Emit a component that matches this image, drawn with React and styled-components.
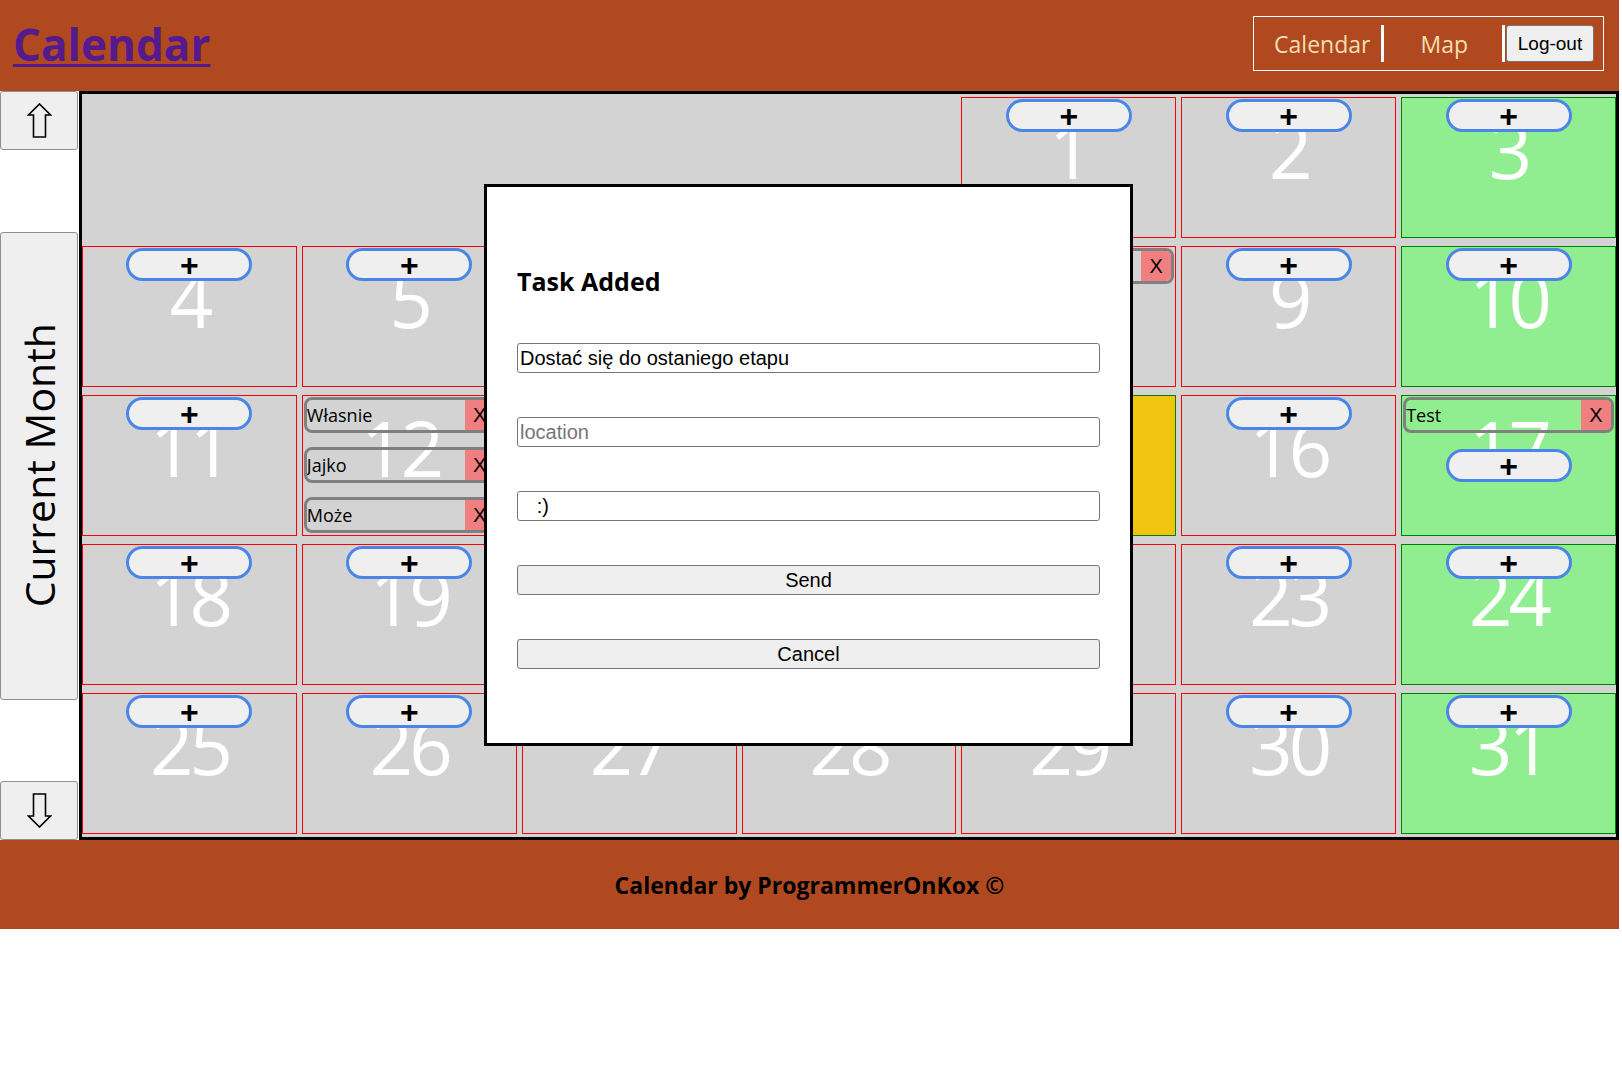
import React from 'react'
import styled, { createGlobalStyle } from 'styled-components'

const GlobalStyle = createGlobalStyle`
	html, body {
		margin: 0;
		padding: 0;
		background: #ffffff;
	}

	body {
		font-family: "Open Sans", "Noto Sans", sans-serif;
	}

	* {
		box-sizing: border-box;
	}
`

const BRICK = '#b0491f'
const FIRST_COLUMN = 5
const TODAY = 15
const MAX_VISIBLE_TASKS = 2

const tasks = {
	8: ['Trening'],
	12: ['Własnie', 'Jajko', 'Może'],
	17: ['Test'],
}

const days = Array.from({ length: 31 }, (_, idx) => idx + 1)

const dayKind = (day) => {
	if (day === TODAY) return 'today'
	if ((day + FIRST_COLUMN - 2) % 7 === 6) return 'weekend'
	return 'normal'
}

const Arrow = ({ down }) => (
	<svg width='25' height='35' viewBox='0 0 25 35'>
		<polygon
			points='12.5,1 23.5,12 18.5,12 18.5,34 6.5,34 6.5,12 1.5,12'
			fill='none'
			stroke='#000'
			strokeWidth='1.6'
			strokeLinejoin='miter'
			transform={down ? 'rotate(180 12.5 17.5)' : undefined}
		/>
	</svg>
)

const App = () => {
	const renderCell = (day) => {
		const list = tasks[day] || []

		return (
			<Cell
				key={day}
				$kind={dayKind(day)}
				$start={day === 1 ? FIRST_COLUMN : null}
				$scrolls={list.length > MAX_VISIBLE_TASKS}
			>
				<DayNumber>{day}</DayNumber>

				<CellBody>
					{list.map((task) => (
						<TaskItem key={task}>
							<TaskText>{task}</TaskText>
							<RemoveButton>X</RemoveButton>
						</TaskItem>
					))}

					<PlusButton>+</PlusButton>
				</CellBody>
			</Cell>
		)
	}

	return (
		<Page>
			<GlobalStyle />

			<Header>
				<Title href='#'>Calendar</Title>

				<Nav>
					<NavLink $pl={20} $pr={11}>Calendar</NavLink>
					<NavLink $pl={36} $pr={34}>Map</NavLink>
					<LogoutButton>Log-out</LogoutButton>
				</Nav>
			</Header>

			<Main>
				<Sidebar>
					<SideButton><Arrow /></SideButton>
					<MonthButton><span>Current Month</span></MonthButton>
					<SideButton><Arrow down /></SideButton>
				</Sidebar>

				<Board>
					{days.map(renderCell)}
				</Board>
			</Main>

			<Footer>Calendar by ProgrammerOnKox ©</Footer>

			<Modal>
				<ModalTitle>Task Added</ModalTitle>
				<Field type='text' defaultValue='Dostać się do ostaniego etapu' />
				<Field type='text' placeholder='location' />
				<Field type='text' defaultValue='   :)' />
				<ModalButton>Send</ModalButton>
				<ModalButton>Cancel</ModalButton>
			</Modal>
		</Page>
	)
}

export default App


const Page = styled.div`
	position: relative;
	width: 100%;
`

const Header = styled.header`
	height: 91px;
	width: calc(100% - 3px);

	display: flex;
	justify-content: space-between;
	align-items: flex-start;

	padding: 0 15px 0 13px;

	background-color: ${BRICK};
`

const Title = styled.a`
	margin-top: 17px;

	font-size: 44px;
	font-weight: 700;
	line-height: 55px;

	color: #551a8b;
	text-decoration: underline;
	text-decoration-thickness: 3px;
	text-underline-offset: 3px;
`

const Nav = styled.nav`
	margin-top: 16px;
	height: 55px;

	display: flex;
	align-items: center;

	padding-right: 9px;

	border: 1px solid #ffffff;
`

const NavLink = styled.div`
	height: 37px;

	display: flex;
	align-items: center;

	padding: 0 ${(p) => p.$pr}px 0 ${(p) => p.$pl}px;

	color: #f5deb3;
	font-size: 23px;

	border-right: 3px solid #ffffff;
`

const LogoutButton = styled.button`
	width: 88px;
	height: 37px;
	margin-left: 1px;

	padding: 0;

	font-family: "Liberation Sans", Arial, sans-serif;
	font-size: 19px;
	color: #000;

	background-color: #efefef;
	border: 1px solid #767676;
	border-radius: 3px;
`

const Main = styled.main`
	height: 749px;
	width: calc(100% - 3px);

	display: flex;
`

const Sidebar = styled.aside`
	width: 79px;

	display: flex;
	flex-direction: column;
	justify-content: space-between;

	padding-right: 1px;
`

const SideButton = styled.button`
	height: 59px;

	display: flex;
	justify-content: center;
	align-items: center;

	padding: 0;

	background-color: #efefef;
	border: 1px solid #8f8f8f;
	border-radius: 3px;
`

const MonthButton = styled(SideButton)`
	height: 468px;

	span {
		writing-mode: vertical-rl;
		transform: rotate(180deg);

		font-family: "Open Sans", sans-serif;
		font-size: 41px;
		color: #000;
		white-space: nowrap;
	}
`

const Board = styled.section`
	flex: 1;

	display: grid;
	grid-template-columns: repeat(7, 1fr);
	grid-auto-rows: 141px;
	column-gap: 5px;
	row-gap: 8px;

	padding: 3px 0;

	background-color: #d3d3d3;
	border: 3px solid #000;
`

const cellColors = {
	normal: '#d3d3d3',
	weekend: '#90ee90',
	today: '#f1c40f',
}

const Cell = styled.div`
	grid-column-start: ${(p) => p.$start || 'auto'};

	display: grid;
	overflow: hidden;

	padding-right: ${(p) => (p.$scrolls ? '17px' : '0')};

	background-color: ${(p) => cellColors[p.$kind]};
	border: 1px solid ${(p) => (p.$kind === 'normal' ? '#ff0000' : '#008000')};

	& > * {
		grid-area: 1 / 1;
	}
`

const DayNumber = styled.div`
	align-self: start;
	margin-top: 14px;

	font-size: 76px;
	line-height: 76px;
	letter-spacing: -4px;
	text-align: center;

	color: #ffffff;
`

const CellBody = styled.div`
	display: flex;
	flex-direction: column;
	align-items: center;

	padding: 1px;
`

const TaskItem = styled.div`
	align-self: stretch;
	height: 36px;
	flex-shrink: 0;

	display: flex;
	align-items: center;

	margin-bottom: 14px;

	border: 3px solid #808080;
	border-radius: 8px;
	overflow: hidden;
`

const TaskText = styled.span`
	flex: 1;

	font-size: 18px;
	color: #000;
	white-space: nowrap;
`

const RemoveButton = styled.button`
	width: 30px;
	height: 30px;
	flex-shrink: 0;

	padding: 0;

	font-family: "Liberation Sans", Arial, sans-serif;
	font-size: 20px;
	color: #000;

	background-color: #f08080;
	border: none;
`

const PlusButton = styled.button`
	width: 126px;
	height: 33px;
	flex-shrink: 0;

	display: flex;
	justify-content: center;
	align-items: center;

	padding: 0;

	font-family: "Liberation Sans", Arial, sans-serif;
	font-size: 32px;
	font-weight: 700;
	line-height: 1;
	color: #000;

	background-color: #efefef;
	border: 3px solid #4a86e8;
	border-radius: 17px;

	${TaskItem} + & {
		margin-top: 2px;
	}
`

const Footer = styled.footer`
	height: 89px;
	width: calc(100% - 3px);

	display: flex;
	justify-content: center;
	align-items: center;

	font-size: 23px;
	font-weight: 700;
	color: #000;

	background-color: ${BRICK};
`

const Modal = styled.div`
	position: absolute;
	top: 184px;
	left: 484px;

	width: 649px;
	height: 562px;

	display: flex;
	flex-direction: column;
	gap: 44px;

	padding: 79px 30px 0;

	background-color: #ffffff;
	border: 3px solid #000;
`

const ModalTitle = styled.h2`
	margin: 0 0 3px;

	font-size: 25px;
	font-weight: 700;
	line-height: 30px;
`

const Field = styled.input`
	height: 30px;
	width: 100%;

	padding: 1px 2px;

	font-family: "Liberation Sans", Arial, sans-serif;
	font-size: 20px;
	color: #000;

	border: 1px solid #767676;
	border-radius: 3px;

	&::placeholder {
		color: #757575;
	}
`

const ModalButton = styled.button`
	height: 30px;
	width: 100%;

	padding: 0;

	font-family: "Liberation Sans", Arial, sans-serif;
	font-size: 20px;
	color: #000;

	background-color: #efefef;
	border: 1px solid #767676;
	border-radius: 3px;
`
